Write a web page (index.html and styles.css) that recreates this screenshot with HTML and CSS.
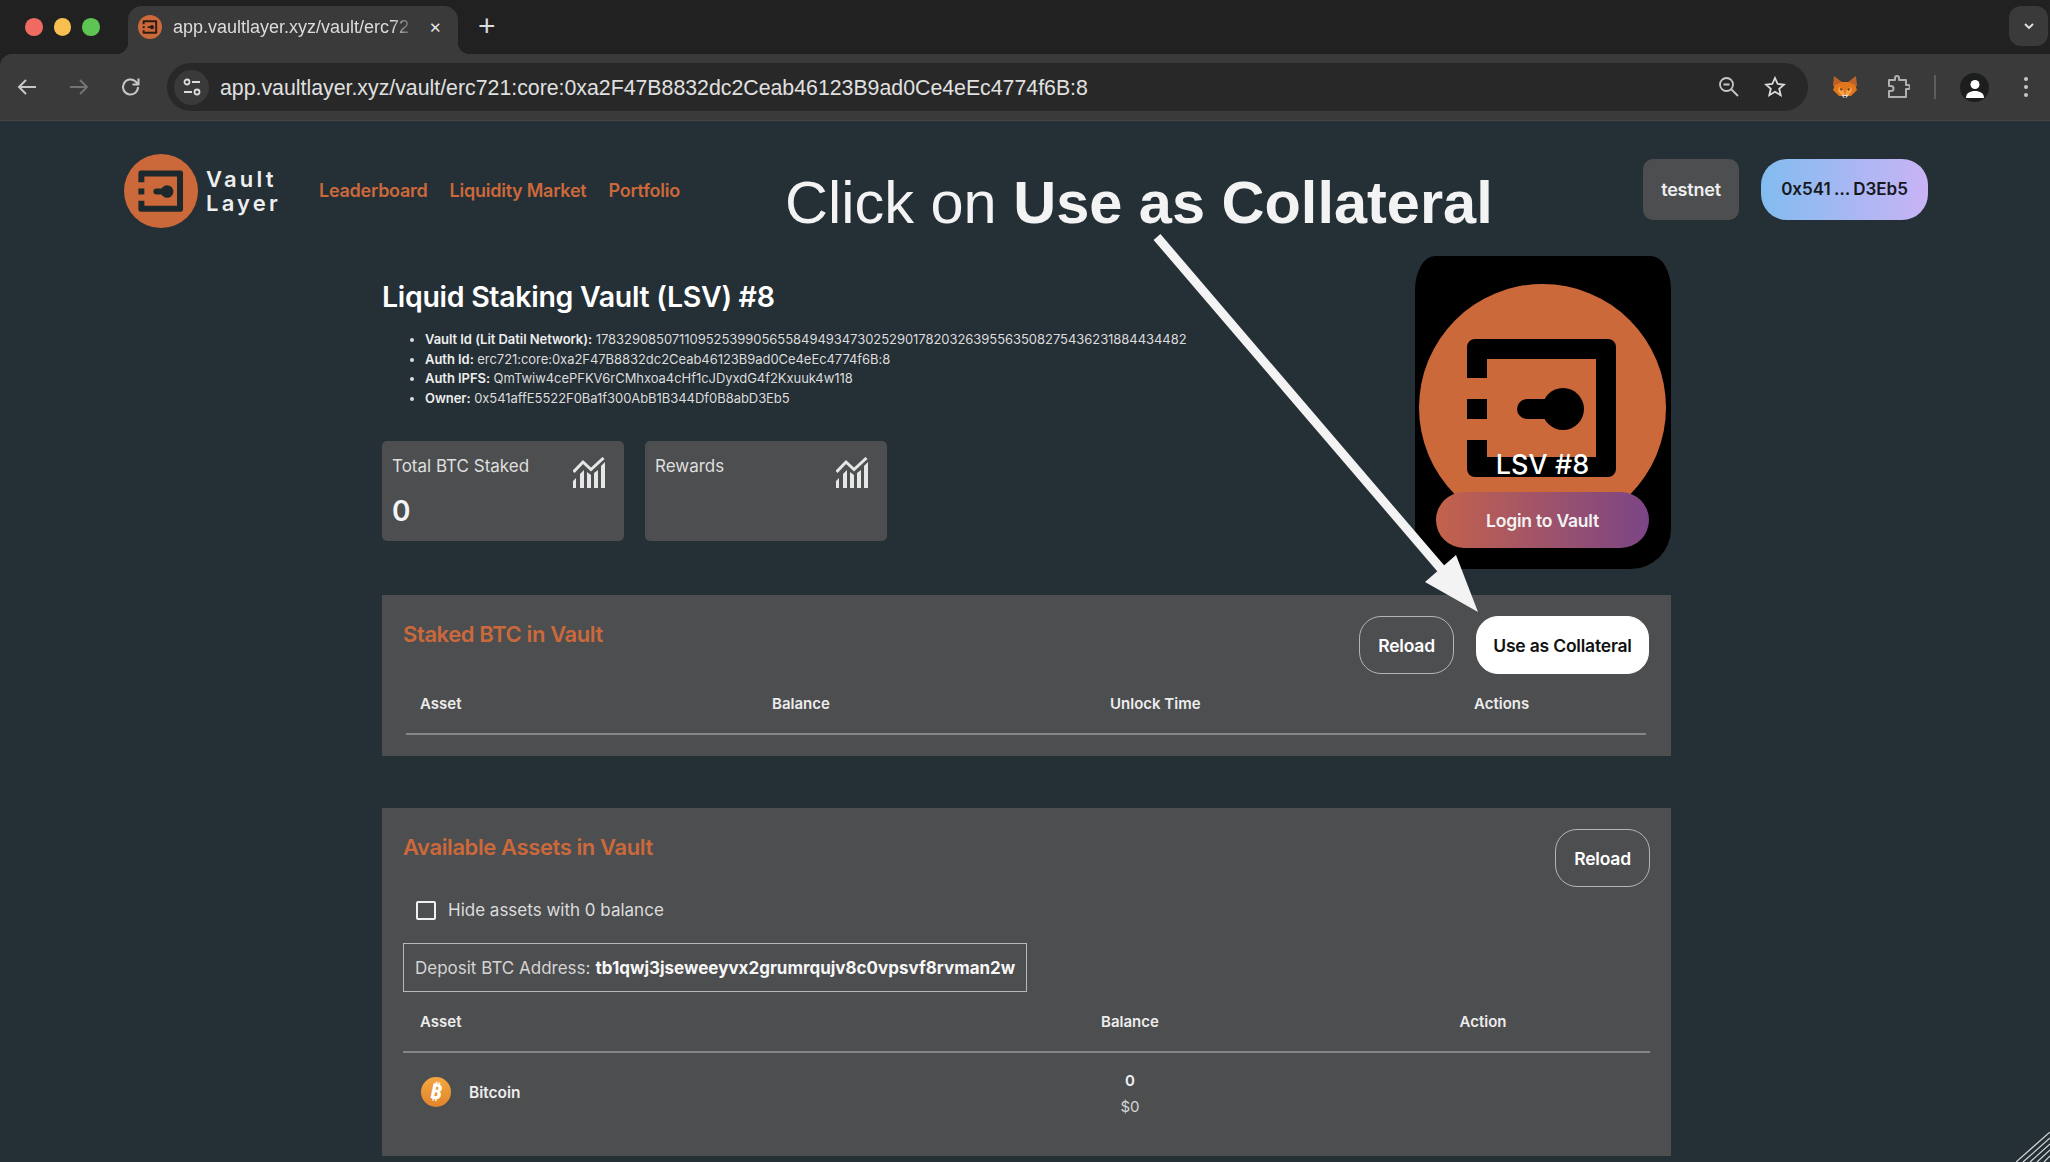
FILE: index.html
```html
<!DOCTYPE html>
<html lang="en">
<head>
<meta charset="utf-8">
<title>Vault Layer</title>
<link rel="stylesheet" href="styles.css">
</head>
<body>
<svg class="defs" width="0" height="0" aria-hidden="true">
  <symbol id="vault-logo" viewBox="0 0 247 247">
    <circle cx="123.5" cy="123.5" r="123.5" fill="#cc693b"/>
    <path fill="currentColor" d="M56 55H189a8 8 0 0 1 8 8V185a8 8 0 0 1-8 8H56a8 8 0 0 1-8-8V156H68V173H177V75H68V94H48V63a8 8 0 0 1 8-8Z"/>
    <rect fill="currentColor" x="48" y="115" width="20" height="20"/>
    <circle fill="currentColor" cx="144" cy="125" r="21"/>
    <rect fill="currentColor" x="98" y="115" width="46" height="20" rx="10"/>
  </symbol>
  <symbol id="chart" viewBox="0 0 32 31">
    <path fill="none" stroke="currentColor" stroke-width="3" d="M0.5 15 10 5 18 12.500 30.500 1"/>
    <path fill="currentColor" d="M0 31V24L3 21V31ZM7 31V17L11 13V31ZM14 31V15L18 18V31ZM21 31V16L25 13V31ZM28 31V9L32 5V31Z"/>
  </symbol>
</svg>

<header class="browser">
  <div class="tabstrip">
    <div class="lights">
      <span class="light red"></span><span class="light yellow"></span><span class="light green"></span>
    </div>
    <div class="tab">
      <svg class="favicon"><use href="#vault-logo"/></svg>
      <span class="tab-title">app.vaultlayer.xyz/vault/erc72</span>
      <span class="tab-close">✕</span>
    </div>
    <span class="tab-new">+</span>
    <span class="tab-search">
      <svg width="14" height="14" viewBox="0 0 14 14"><path d="M3 5l4 4 4-4" fill="none" stroke="#e3e3e3" stroke-width="1.800"/></svg>
    </span>
  </div>
  <div class="toolbar">
    <svg class="nav-icon" viewBox="0 0 20 20"><path d="M19 10H2M9 3l-7 7 7 7" fill="none" stroke="#c7c7c7" stroke-width="2"/></svg>
    <svg class="nav-icon dim" viewBox="0 0 20 20"><path d="M1 10h17M11 3l7 7-7 7" fill="none" stroke="#737373" stroke-width="2"/></svg>
    <svg class="nav-icon" viewBox="0 0 20 20"><path d="M17 10a7.500 7.500 0 1 1-2.400-5.500L17 7M17.500 1.500V7.500H11.500" fill="none" stroke="#c7c7c7" stroke-width="2"/></svg>
    <div class="omnibox">
      <span class="site-btn">
        <svg width="20" height="20" viewBox="0 0 20 20"><g fill="none" stroke="#dcdcdc" stroke-width="1.800"><circle cx="5" cy="5" r="2.500"/><path d="M10 5h8M2 15h8"/><circle cx="15" cy="15" r="2.500"/></g></svg>
      </span>
      <span class="url">app.vaultlayer.xyz/vault/erc721:core:0xa2F47B8832dc2Ceab46123B9ad0Ce4eEc4774f6B:8</span>
      <svg class="omni-icon" viewBox="0 0 22 22"><g fill="none" stroke="#c7c7c7" stroke-width="1.800"><circle cx="8.500" cy="8.500" r="6.500"/><path d="M13.500 13.500 20 20M5.500 8.500h6"/></g></svg>
      <svg class="omni-icon" viewBox="0 0 22 22"><path d="M11 2l2.700 6 6.300.6-4.800 4.200 1.500 6.400L11 15.800l-5.700 3.400 1.500-6.400L2 8.600 8.300 8Z" fill="none" stroke="#dcdcdc" stroke-width="1.800"/></svg>
    </div>
    <svg class="fox" viewBox="0 0 24 22">
      <path fill="#b9622a" d="M1 0 9 6H15L23 0 24 9 22 13H2L0 9Z"/>
      <path fill="#e2761b" d="M2 9 9 6H15L22 9 24 14 18 20H6L0 14Z"/>
      <path fill="#f6a14b" d="M6 11 10 13 12 20 14 13 18 11 19 15 15 20H9L5 15Z"/>
      <path fill="#5c3213" d="M7 12l3 1-2 2ZM17 12l-3 1 2 2Z"/>
      <path fill="#e4e4e4" d="M9 19H15L14 21.500H10Z"/>
      <path fill="#333" d="M10.500 20h3l-1 1.500h-1Z"/>
    </svg>
    <svg class="puzzle" viewBox="0 0 24 24"><path d="M3 5H9V3a2 2 0 0 1 4 0V5H20V10H22a2 2 0 0 1 0 4H20V22H3V16H5a2.500 2.500 0 0 0 0-5H3Z" fill="none" stroke="#b0b0b0" stroke-width="2" stroke-linejoin="round"/></svg>
    <span class="tb-divider"></span>
    <span class="avatar">
      <svg width="18" height="20" viewBox="0 0 18 20"><circle cx="9" cy="5.500" r="4.500" fill="#fff"/><path d="M0 19c0-5 4-7 9-7s9 2 9 7Z" fill="#fff"/></svg>
    </span>
    <span class="menu-dots"><i></i><i></i><i></i></span>
  </div>
</header>

<div class="page">
  <nav class="topnav">
    <div class="brand">
      <svg class="brand-mark"><use href="#vault-logo"/></svg>
      <div class="brand-name">Vault<br>Layer</div>
    </div>
    <div class="nav-links">
      <a>Leaderboard</a><a>Liquidity Market</a><a>Portfolio</a>
    </div>
    <div class="nav-right">
      <span class="network">testnet</span>
      <span class="wallet">0x541 … D3Eb5</span>
    </div>
  </nav>

  <main class="content">
    <div class="vault-head">
      <div class="vault-info">
        <h1>Liquid Staking Vault (LSV) #8</h1>
        <ul class="meta">
          <li><b>Vault Id (Lit Datil Network):</b> 1783290850711095253990565584949347302529017820326395563508275436231884434482</li>
          <li><b>Auth Id:</b> erc721:core:0xa2F47B8832dc2Ceab46123B9ad0Ce4eEc4774f6B:8</li>
          <li><b>Auth IPFS:</b> QmTwiw4cePFKV6rCMhxoa4cHf1cJDyxdG4f2Kxuuk4w118</li>
          <li><b>Owner:</b> 0x541affE5522F0Ba1f300AbB1B344Df0B8abD3Eb5</li>
        </ul>
        <div class="stats">
          <div class="stat">
            <div class="stat-top"><span>Total BTC Staked</span><svg class="stat-icon"><use href="#chart"/></svg></div>
            <div class="stat-value">0</div>
          </div>
          <div class="stat">
            <div class="stat-top"><span>Rewards</span><svg class="stat-icon"><use href="#chart"/></svg></div>
          </div>
        </div>
      </div>
      <div class="vault-card">
        <svg class="vault-art"><use href="#vault-logo"/></svg>
        <div class="vault-label">LSV #8</div>
        <button class="login">Login to Vault</button>
      </div>
    </div>

    <section class="panel staked">
      <div class="panel-head">
        <h2>Staked BTC in Vault</h2>
        <div class="panel-actions">
          <button class="btn">Reload</button>
          <button class="btn primary">Use as Collateral</button>
        </div>
      </div>
      <div class="thead four">
        <span>Asset</span><span>Balance</span><span>Unlock Time</span><span>Actions</span>
      </div>
    </section>

    <section class="panel assets">
      <div class="panel-head">
        <h2>Available Assets in Vault</h2>
        <div class="panel-actions">
          <button class="btn">Reload</button>
        </div>
      </div>
      <label class="hide-zero"><span class="check"></span>Hide assets with 0 balance</label>
      <div class="deposit">Deposit BTC Address: <b>tb1qwj3jseweeyvx2grumrqujv8c0vpsvf8rvman2w</b></div>
      <div class="thead three">
        <span>Asset</span><span class="center">Balance</span><span class="center">Action</span>
      </div>
      <div class="trow three">
        <div class="asset">
          <svg width="30" height="30" viewBox="0 0 30 30">
            <defs><linearGradient id="btc" x1="0" y1="0" x2="0" y2="1"><stop offset="0" stop-color="#f5a742"/><stop offset="1" stop-color="#e0842a"/></linearGradient></defs>
            <circle cx="15" cy="15" r="15" fill="url(#btc)"/>
            <text x="15" y="22" text-anchor="middle" class="btc-glyph" transform="rotate(12 15 15)">₿</text>
          </svg>
          <span>Bitcoin</span>
        </div>
        <div class="balance"><b>0</b><span>$0</span></div>
        <div></div>
      </div>
    </section>
  </main>
</div>

<div class="callout">Click on <b>Use as Collateral</b></div>
<svg class="arrow" width="2050" height="1162" viewBox="0 0 2050 1162" aria-hidden="true">
  <path d="M1157 237 1443 571" fill="none" stroke="#f3f3f3" stroke-width="9"/>
  <path d="M1478 612 1425 582 1456 555Z" fill="#f3f3f3"/>
</svg>
<svg class="grip" width="34" height="30" viewBox="0 0 34 30" aria-hidden="true">
  <path d="M0 30 34 0M7 30 34 6M14 30 34 12M21 30 34 18M28 30 34 24" fill="none" stroke="#d5d7d8" stroke-width="1.200"/>
</svg>
</body>
</html>
```

FILE: styles.css
```css
* { box-sizing: border-box; }

html, body {
  margin: 0;
  width: 2050px;
  height: 1162px;
  overflow: hidden;
}

body {
  position: relative;
  background: #252f36;
  color: #fff;
  font-family: Inter, "Noto Sans", sans-serif;
}

.defs { position: absolute; }

/* Browser chrome */
.browser { background: #202120; }

.tabstrip {
  height: 54px;
  padding-top: 6px;
  display: flex;
  align-items: flex-start;
}

.lights {
  display: flex;
  gap: 11px;
  padding: 12px 0 0 25px;
  width: 128px;
}

.light { width: 17.500px; height: 17.500px; border-radius: 50%; }
.red { background: #ef6a60; }
.yellow { background: #f6bf4f; }
.green { background: #5ec454; }

.tab {
  position: relative;
  width: 330px;
  height: 48px;
  background: #3a3a3a;
  border-radius: 14px 14px 0 0;
  display: flex;
  align-items: center;
  padding: 0 12px 6px 10px;
}

.tab::before, .tab::after {
  content: "";
  position: absolute;
  bottom: 0;
  width: 12px;
  height: 12px;
}
.tab::before { left: -12px; background: radial-gradient(circle at 0 0, transparent 12px, #3a3a3a 12.500px); }
.tab::after { right: -12px; background: radial-gradient(circle at 100% 0, transparent 12px, #3a3a3a 12.500px); }

.favicon { width: 24px; height: 24px; color: #2b1c14; flex: none; }

.tab-title {
  margin-left: 11px;
  width: 243px;
  overflow: hidden;
  white-space: nowrap;
  font: 18px/24px "Liberation Sans", sans-serif;
  color: #dcdcdc;
  -webkit-mask-image: linear-gradient(90deg, #000 90%, transparent);
  mask-image: linear-gradient(90deg, #000 90%, transparent);
}

.tab-close { margin-left: 13px; font-size: 15px; color: #e3e3e3; }

.tab-new {
  margin: 3px 0 0 20px;
  font: 300 30px/34px "Liberation Sans", sans-serif;
  color: #dcdcdc;
}

.tab-search {
  margin-left: auto;
  margin-right: 2px;
  width: 39px;
  height: 40px;
  border-radius: 12px;
  background: #3a3a3a;
  display: flex;
  align-items: center;
  justify-content: center;
}

.toolbar {
  height: 67px;
  background: #3a3a3a;
  border-radius: 12px 0 0 0;
  border-bottom: 1px solid #454545;
  display: flex;
  align-items: center;
  padding: 0 0 0 17px;
}

.nav-icon { width: 20px; height: 20px; flex: none; margin-right: 32px; }
.omnibox {
  width: 1641px;
  height: 48px;
  margin-left: -6px;
  background: #282828;
  border-radius: 24px;
  display: flex;
  align-items: center;
  padding: 0 22px 0 7px;
  flex: none;
}

.site-btn {
  width: 35px;
  height: 35px;
  border-radius: 50%;
  background: #3a3a3a;
  display: flex;
  align-items: center;
  justify-content: center;
  flex: none;
}

.url {
  margin: 1px 0 0 11px;
  flex: 1;
  font: 21.300px/26px "Liberation Sans", sans-serif;
  color: #e0e0e0;
  white-space: nowrap;
}

.omni-icon { width: 22px; height: 22px; margin-left: 24px; flex: none; }

.fox { width: 24px; height: 22px; margin-left: 25px; flex: none; }
.puzzle { width: 24px; height: 24px; margin-left: 29px; flex: none; }
.tb-divider { width: 2px; height: 24px; background: #5d5d5d; margin-left: 24px; flex: none; }

.avatar {
  width: 29px;
  height: 29px;
  margin-left: 24px;
  border-radius: 50%;
  background: #1c1d1d;
  display: flex;
  align-items: flex-end;
  justify-content: center;
  padding-bottom: 3px;
  flex: none;
}

.menu-dots {
  margin-left: 35px;
  display: flex;
  flex-direction: column;
  gap: 4px;
}
.menu-dots i { width: 4px; height: 4px; border-radius: 50%; background: #c7c7c7; }

/* Page */
.page { padding: 32px 122px 0 124px; }

.topnav {
  height: 74px;
  display: flex;
  align-items: center;
}

.brand { display: flex; align-items: center; gap: 8px; margin-top: 2px; }
.brand-mark { width: 74px; height: 74px; color: #1d282d; }
.brand-name {
  font-size: 22px;
  line-height: 24px;
  font-weight: 600;
  letter-spacing: 3.200px;
  color: #eeeeee;
}

.nav-links {
  display: flex;
  gap: 22px;
  margin-left: 38px;
  font-size: 18px;
  font-weight: 600;
  color: #cc693b;
  letter-spacing: -0.250px;
}

.nav-right { margin-left: auto; margin-bottom: 2px; display: flex; gap: 22px; }

.network {
  width: 96px;
  height: 61px;
  background: #4d4e50;
  border-radius: 10px;
  display: flex;
  align-items: center;
  justify-content: center;
  font-size: 18px;
  font-weight: 600;
  letter-spacing: -0.200px;
  color: #eee;
}

.wallet {
  width: 167px;
  height: 61px;
  border-radius: 26px;
  background: linear-gradient(90deg, #82bcf0, #c9b3f5);
  display: flex;
  align-items: center;
  justify-content: center;
  font-size: 17px;
  font-weight: 600;
  word-spacing: -1px;
  color: #16181c;
}

.content { width: 1289px; margin: 29px 0 0 258px; }

.vault-head { display: flex; justify-content: space-between; align-items: flex-start; }

h1 {
  margin: 21px 0 0;
  font-size: 28.500px;
  line-height: 40px;
  font-weight: 600;
  letter-spacing: -0.300px;
}

.meta {
  margin: 13px 0 0;
  padding: 0 0 0 43px;
  font-size: 13px;
  line-height: 19.500px;
  color: #dcdcdc;
  letter-spacing: -0.050px;
}
.meta b { font-weight: 600; color: #eee; }

.stats { display: flex; gap: 21px; margin-top: 33px; }

.stat {
  width: 242px;
  height: 100px;
  background: #4d4e50;
  border-radius: 5px;
  padding: 15px 19px 0 10px;
}

.stat-top {
  display: flex;
  justify-content: space-between;
  font-size: 17px;
  line-height: 20px;
  color: #dfdfdf;
}

.stat-icon { width: 32px; height: 31px; margin-top: 1px; color: #e6e6e6; flex: none; }

.stat-value {
  margin-top: 5px;
  font-size: 28px;
  line-height: 36px;
  font-weight: 600;
  color: #f5f5f5;
}

.vault-card {
  width: 256px;
  height: 313px;
  background: #000;
  border-radius: 20px 20px 40px 40px / 34px 34px 40px 40px;
  padding: 28px 1px 0 0;
  display: flex;
  flex-direction: column;
  align-items: center;
}

.vault-art { width: 247px; height: 247px; color: #000; flex: none; }

.vault-label {
  margin-top: -82px;
  height: 32px;
  font-size: 27px;
  line-height: 32px;
  font-weight: 500;
  color: #fff;
  position: relative;
}

.login {
  margin-top: 11px;
  width: 213px;
  height: 56px;
  border: 0;
  border-radius: 28px;
  background: linear-gradient(90deg, #c4624c, #7b4586);
  font: 600 17.500px Inter, sans-serif;
  letter-spacing: -0.200px;
  color: #f3f3f3;
  position: relative;
}

.panel { background: #4d4e50; }

.staked { height: 161px; margin-top: 26px; padding: 21px 22px 0 21px; }
.assets { height: 348px; margin-top: 52px; padding: 21px 21px 0 21px; }

.panel-head { display: flex; justify-content: space-between; align-items: flex-start; }

h2 {
  margin: 5px 0 0;
  font-size: 22px;
  line-height: 26px;
  font-weight: 600;
  letter-spacing: -0.400px;
  color: #cc693b;
}

.panel-actions { display: flex; gap: 22px; }

.btn {
  height: 58px;
  width: 95px;
  padding: 0;
  border: 1px solid #b5b5b5;
  border-radius: 22px;
  background: transparent;
  color: #fff;
  font: 600 17.500px Inter, sans-serif;
  letter-spacing: -0.200px;
}

.btn.primary {
  width: 173px;
  background: #fff;
  border-color: #fff;
  color: #111;
}

.thead {
  display: grid;
  align-items: center;
  font-size: 15px;
  font-weight: 600;
  color: #ececec;
  border-bottom: 2px solid #868686;
}

.thead.four {
  grid-template-columns: 352px 338px 364px 184px;
  height: 61px;
  margin: 0 3px 0 3px;
  padding-left: 14px;
}

.thead.three { height: 61px; }
.three { display: grid; grid-template-columns: 540px 374px 332px; }
.thead.three span:first-child { padding-left: 17px; }

.center { text-align: center; }

.hide-zero {
  display: flex;
  align-items: center;
  margin: 13px 0 0 13px;
  height: 20px;
  font-size: 17px;
  color: #dcdcdc;
}

.check {
  width: 20px;
  height: 19px;
  border: 2px solid #f0f0f0;
  border-radius: 2px;
  margin-right: 12px;
}

.deposit {
  width: 624px;
  height: 49px;
  margin-top: 23px;
  border: 1px solid #b9b9b9;
  display: flex;
  align-items: center;
  gap: 5px;
  padding-left: 11px;
  font-size: 17px;
  color: #d5d5d5;
  white-space: nowrap;
}
.deposit b { font-weight: 700; color: #f7f7f7; }

.trow { margin-top: 24px; height: 54px; }

.asset {
  display: flex;
  align-items: center;
  gap: 18px;
  padding-left: 18px;
  height: 30px;
  font-size: 15.500px;
  font-weight: 600;
  color: #ececec;
}

.btc-glyph { font: 700 21px "DejaVu Sans", "Noto Sans", sans-serif; fill: #fff; }

.balance {
  display: flex;
  flex-direction: column;
  align-items: center;
  gap: 8px;
  margin-top: -5px;
  font-size: 15px;
  line-height: 18px;
  color: #d5d5d5;
}
.balance b { font-weight: 600; color: #f0f0f0; }

/* Annotation drawn over the page */
.callout {
  position: absolute;
  left: 785px;
  top: 166px;
  font: 59.500px/74px "Liberation Sans", Arial, sans-serif;
  color: #f3f3f3;
  white-space: nowrap;
}

.arrow { position: absolute; left: 0; top: 0; pointer-events: none; }
.grip { position: absolute; right: 0; bottom: 0; }
```
